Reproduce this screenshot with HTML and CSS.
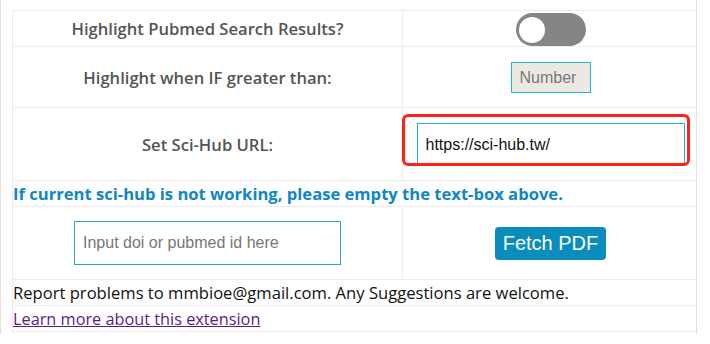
FILE: index.html
```html
<!DOCTYPE html>
<html lang="en">
<head>
<meta charset="UTF-8">
<meta name="viewport" content="width=device-width, initial-scale=1.0">
<title>Pubmed Highlighter Options</title>
<link rel="stylesheet" href="styles.css">
</head>
<body>

<table class="options">
    <tr class="row-toggle">
        <td class="label">Highlight Pubmed Search Results?</td>
        <td class="ctrl">
            <label class="switch">
                <input type="checkbox">
                <span class="slider"></span>
            </label>
        </td>
    </tr>
    <tr class="row-if">
        <td class="label">Highlight when IF greater than:</td>
        <td class="ctrl"><input class="if-input" type="text" placeholder="Number"></td>
    </tr>
    <tr class="row-url">
        <td class="label">Set Sci-Hub URL:</td>
        <td class="ctrl url-cell">
            <input class="url-input" type="text" value="https://sci-hub.tw/">
            <span class="mark"></span> <!-- red annotation box -->
        </td>
    </tr>
    <tr class="row-note">
        <td class="note" colspan="2">If current sci-hub is not working, please empty the text-box above.</td>
    </tr>
    <tr class="row-fetch">
        <td class="ctrl"><input class="doi-input" type="text" placeholder="Input doi or pubmed id here"></td>
        <td class="ctrl"><button class="fetch-btn">Fetch PDF</button></td>
    </tr>
    <tr class="row-line">
        <td class="plain" colspan="2">Report problems to mmbioe@gmail.com. Any Suggestions are welcome.</td>
    </tr>
    <tr class="row-line">
        <td class="plain" colspan="2"><a class="more" href="#">Learn more about this extension</a></td>
    </tr>
</table>

</body>
</html>
```

FILE: styles.css
```css
body {
    font-family: "Open Sans", "Noto Sans", sans-serif;
    background-color: #fff;
    margin: 0;
    padding: 10px 0 0 11px;
    border-left: 1px solid #e2e2e2;
    border-right: 1px solid #e2e2e2;
    height: 334px;
    width: 697px;
    box-sizing: border-box;
}
.options {
    border-collapse: collapse;
    width: 687px;
    table-layout: fixed;
}
.options td {
    border: 1px solid #ececec;
    padding: 0;
}
.options td:first-child {
    width: 389px;
}
.label {
    text-align: center;
    color: #555;
    font-weight: 600;
    font-size: 16.6px;
}
.ctrl {
    text-align: center;
    vertical-align: middle;
}
.row-toggle td { height: 35px; }
.row-if td { height: 60px; }
.row-url td { height: 72px; }
.row-note td { height: 25px; }
.row-fetch td { height: 72px; }
.row-line td { height: 25px; }

/* toggle switch */
.switch {
    position: relative;
    display: inline-block;
    width: 70px;
    height: 33px;
    vertical-align: middle;
    margin-top: 1px;
}
.switch input {
    opacity: 0;
    width: 0;
    height: 0;
}
.slider {
    position: absolute;
    cursor: pointer;
    top: 0;
    left: 0;
    right: 0;
    bottom: 0;
    background-color: #858585;
    border-radius: 17px;
}
.slider:before {
    position: absolute;
    content: "";
    width: 26px;
    height: 26px;
    left: 3px;
    top: 4px;
    background-color: #fff;
    border-radius: 50%;
}

input {
    font-family: "Liberation Sans", Arial, sans-serif;
    font-size: 16px;
    box-sizing: border-box;
    outline: none;
}
input::placeholder {
    color: #777;
}
.if-input {
    width: 80px;
    height: 31px;
    padding: 0 0 0 8px;
    background-color: #ebe9e2;
    border: 1px solid #1cb8cf;
    margin-top: 1px;
}
.url-cell {
    position: relative;
}
.url-input {
    width: 268px;
    height: 43px;
    padding: 0 8px;
    border: 1px solid #19b6cc;
    color: #111;
    margin-top: 1px;
}
.mark {
    position: absolute;
    left: -1px;
    top: 6px;
    width: 288px;
    height: 52px;
    border: 3px solid #ff2316;
    border-radius: 6px;
    box-sizing: border-box;
}
.note {
    color: #0f86c6;
    font-weight: 700;
    font-size: 16.6px;
}
.doi-input {
    width: 267px;
    height: 44px;
    padding: 0 8px;
    border: 1px solid #2aa8bf;
}
.fetch-btn {
    font-family: "Liberation Sans", Arial, sans-serif;
    font-size: 20px;
    color: #fff;
    background-color: #0a8cbd;
    border: none;
    border-radius: 4px;
    width: 111px;
    height: 33px;
    padding: 0;
    cursor: pointer;
}
.plain {
    font-size: 16.6px;
    color: #111;
}
.more {
    color: #5a1a8b;
    font-size: 16.3px;
}
```
